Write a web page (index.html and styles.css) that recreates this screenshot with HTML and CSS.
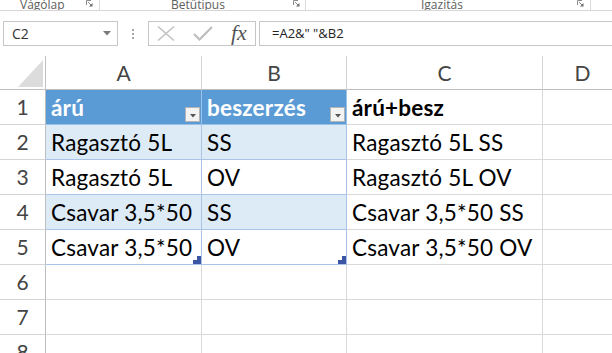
FILE: index.html
```html
<!DOCTYPE html>
<html lang="hu">
<head>
<meta charset="utf-8">
<title>Excel</title>
<link rel="stylesheet" href="styles.css">
</head>
<body>
<div class="app">
  <div class="ribbon">
    <div class="group g1">
      <span class="glabel">Vágólap</span>
      <svg class="launcher" width="7" height="7" viewBox="0 0 7 7"><path d="M0.5 5V0.5H5" fill="none" stroke="#8a8a8a"/><path d="M2 2L5.5 5.5" stroke="#8a8a8a"/><path d="M3 6.5H6.5V3Z" fill="#6a6a6a"/></svg>
    </div>
    <div class="group g2">
      <span class="glabel">Betűtípus</span>
      <svg class="launcher" width="7" height="7" viewBox="0 0 7 7"><path d="M0.5 5V0.5H5" fill="none" stroke="#8a8a8a"/><path d="M2 2L5.5 5.5" stroke="#8a8a8a"/><path d="M3 6.5H6.5V3Z" fill="#6a6a6a"/></svg>
    </div>
    <div class="group g3">
      <span class="glabel">Igazítás</span>
      <svg class="launcher" width="7" height="7" viewBox="0 0 7 7"><path d="M0.5 5V0.5H5" fill="none" stroke="#8a8a8a"/><path d="M2 2L5.5 5.5" stroke="#8a8a8a"/><path d="M3 6.5H6.5V3Z" fill="#6a6a6a"/></svg>
    </div>
  </div>

  <div class="fbar">
    <div class="namebox">
      <span class="nb-text">C2</span>
      <svg class="nb-arrow" width="8" height="5" viewBox="0 0 8 5"><path d="M0 0H8L4 4.5Z" fill="#7a7a7a"/></svg>
    </div>
    <div class="grip"><i></i><i></i><i></i></div>
    <div class="fxbox">
      <svg class="ic-x" width="18" height="15" viewBox="0 0 18 15"><path d="M1 0.5L17 14.5M17 0.5L1 14.5" stroke="#c4c4c4" stroke-width="1.6"/></svg>
      <svg class="ic-check" width="20" height="15" viewBox="0 0 20 15"><path d="M1 8L6.5 13.5L19 1" fill="none" stroke="#bdbdbd" stroke-width="2.2"/></svg>
      <span class="ic-fx">fx</span>
    </div>
    <div class="finput">=A2&amp;" "&amp;B2</div>
  </div>

  <div class="sheet">
    <div class="cell corner"><svg width="25" height="27" viewBox="0 0 25 27"><path d="M25 0V27H0Z" fill="#dcdcdc"/></svg></div>
    <div class="cell colh">A</div>
    <div class="cell colh">B</div>
    <div class="cell colh">C</div>
    <div class="cell colh">D</div>

    <div class="cell rowh">1</div>
    <div class="cell th">árú<span class="filter"><svg width="6" height="4" viewBox="0 0 6 4"><path d="M0 0H6L3 3.5Z" fill="#555"/></svg></span></div>
    <div class="cell th th-last">beszerzés<span class="filter"><svg width="6" height="4" viewBox="0 0 6 4"><path d="M0 0H6L3 3.5Z" fill="#555"/></svg></span></div>
    <div class="cell bold">árú+besz</div>
    <div class="cell"></div>

    <div class="cell rowh">2</div>
    <div class="cell tb band">Ragasztó 5L</div>
    <div class="cell tb band tb-last">SS</div>
    <div class="cell">Ragasztó 5L SS</div>
    <div class="cell"></div>

    <div class="cell rowh">3</div>
    <div class="cell tb">Ragasztó 5L</div>
    <div class="cell tb tb-last">OV</div>
    <div class="cell">Ragasztó 5L OV</div>
    <div class="cell"></div>

    <div class="cell rowh">4</div>
    <div class="cell tb band">Csavar 3,5*50</div>
    <div class="cell tb band tb-last">SS</div>
    <div class="cell">Csavar 3,5*50 SS</div>
    <div class="cell"></div>

    <div class="cell rowh">5</div>
    <div class="cell tb">Csavar 3,5*50<svg class="resize" width="8" height="8" viewBox="0 0 8 8"><path d="M8 0V8H0V4H4V0Z" fill="#3c55a5"/></svg></div>
    <div class="cell tb tb-last">OV<svg class="resize" width="8" height="8" viewBox="0 0 8 8"><path d="M8 0V8H0V4H4V0Z" fill="#3c55a5"/></svg></div>
    <div class="cell">Csavar 3,5*50 OV</div>
    <div class="cell"></div>

    <div class="cell rowh">6</div>
    <div class="cell"></div><div class="cell"></div><div class="cell"></div><div class="cell"></div>
    <div class="cell rowh">7</div>
    <div class="cell"></div><div class="cell"></div><div class="cell"></div><div class="cell"></div>
    <div class="cell rowh">8</div>
    <div class="cell"></div><div class="cell"></div><div class="cell"></div><div class="cell"></div>
  </div>
</div>
</body>
</html>
```

FILE: styles.css
```css
* { box-sizing: border-box; }
html, body { margin: 0; padding: 0; background: #ffffff; }
body { width: 612px; height: 353px; overflow: hidden; }
.app { width: 612px; height: 353px; overflow: hidden; font-family: "Open Sans", "Noto Sans", sans-serif; }

/* ribbon strip */
.ribbon {
  display: flex;
  height: 11px;
  border-bottom: 1px solid #d6d6d6;
  overflow: hidden;
  align-items: flex-end;
}
.group {
  flex-shrink: 0;
  display: flex;
  align-items: flex-end;
  height: 14px;
  border-right: 1px solid #dadada;
  padding-bottom: 1px;
}
.glabel {
  font-size: 12px;
  line-height: 14px;
  color: #5e5e5e;
  margin-bottom: -3px;
}
.launcher { margin-left: auto; margin-bottom: 2px; }
.g1 { width: 100px; padding-left: 20px; padding-right: 6px; }
.g2 { width: 206px; padding-left: 71px; padding-right: 5px; }
.g3 { width: 285px; padding-left: 115px; padding-right: 6px; }

/* formula bar */
.fbar {
  display: flex;
  height: 25px;
  margin-top: 10px;
}
.fbar > * { flex-shrink: 0; }
.namebox {
  margin-left: 3px;
  width: 115px;
  border: 1px solid #c6c6c6;
  display: flex;
  align-items: center;
  padding-left: 8px;
  padding-right: 6px;
}
.nb-text { font-size: 14px; color: #333; }
.nb-arrow { margin-left: auto; }
.grip {
  width: 30px;
  display: flex;
  flex-direction: column;
  align-items: center;
  justify-content: center;
  gap: 2px;
}
.grip i { display: block; width: 2px; height: 2px; background: #a8a8a8; }
.fxbox {
  width: 108px;
  border: 1px solid #c6c6c6;
  display: flex;
  align-items: center;
  padding-left: 8px;
}
.ic-x { margin-right: 18px; }
.ic-check { margin-right: 18px; }
.ic-fx {
  font-family: "Liberation Serif", "DejaVu Serif", serif;
  font-style: italic;
  font-size: 22px;
  color: #555;
  line-height: 1;
  margin-top: -2px;
}
.finput {
  margin-left: 3px;
  width: 360px;
  border: 1px solid #c6c6c6;
  padding-left: 12px;
  font-size: 13px;
  line-height: 23px;
  color: #222;
}

/* sheet grid */
.sheet {
  margin-top: 10px;
  display: grid;
  grid-template-columns: 46px 156px 145px 196px 80px;
  grid-template-rows: 34px repeat(8, 35px);
  font-family: "Lato", "Open Sans", sans-serif;
}
.cell {
  position: relative;
  border-right: 1px solid #d9d9d9;
  border-bottom: 1px solid #d9d9d9;
  font-size: 22.5px;
  letter-spacing: 0.2px;
  line-height: 26px;
  color: #000;
  display: flex;
  align-items: flex-end;
  padding: 0 4px 3px 5px;
  white-space: nowrap;
}
.corner {
  border-right: 1px solid #c0c0c0;
  border-bottom: 1px solid #c0c0c0;
  justify-content: flex-end;
  padding: 0 2px 2px 0;
}
.corner svg { display: block; }
.colh {
  border-right: 1px solid #d4d4d4;
  border-bottom: 1px solid #bdbdbd;
  justify-content: center;
  color: #444;
  font-size: 21px;
  letter-spacing: 0;
  padding: 0 0 3px 0;
}
.rowh {
  border-right: 1px solid #bdbdbd;
  border-bottom: 1px solid #d4d4d4;
  justify-content: center;
  align-items: center;
  color: #444;
  font-size: 21px;
  letter-spacing: 0;
  padding: 0;
}
.bold { font-weight: 700; }
.th {
  background: #5b9bd5;
  color: #fff;
  font-weight: 700;
  border-right-color: #9dc3e6;
  border-bottom-color: #9bc2e6;
}
.th-last { border-right-color: #9bc2e6; }
.tb { border-right-color: #a9c4e6; border-bottom-color: #a9c4e6; }
.band { background: #ddebf7; }
.filter {
  position: absolute;
  right: 1px;
  bottom: 2px;
  width: 15px;
  height: 15px;
  background: #f3f3f3;
  border: 1px solid #b4b4b4;
  display: flex;
  align-items: flex-end;
  justify-content: center;
  padding-bottom: 3px;
}
.filter svg { display: block; }
.resize {
  position: absolute;
  right: 0;
  bottom: 0;
  display: block;
}
```
